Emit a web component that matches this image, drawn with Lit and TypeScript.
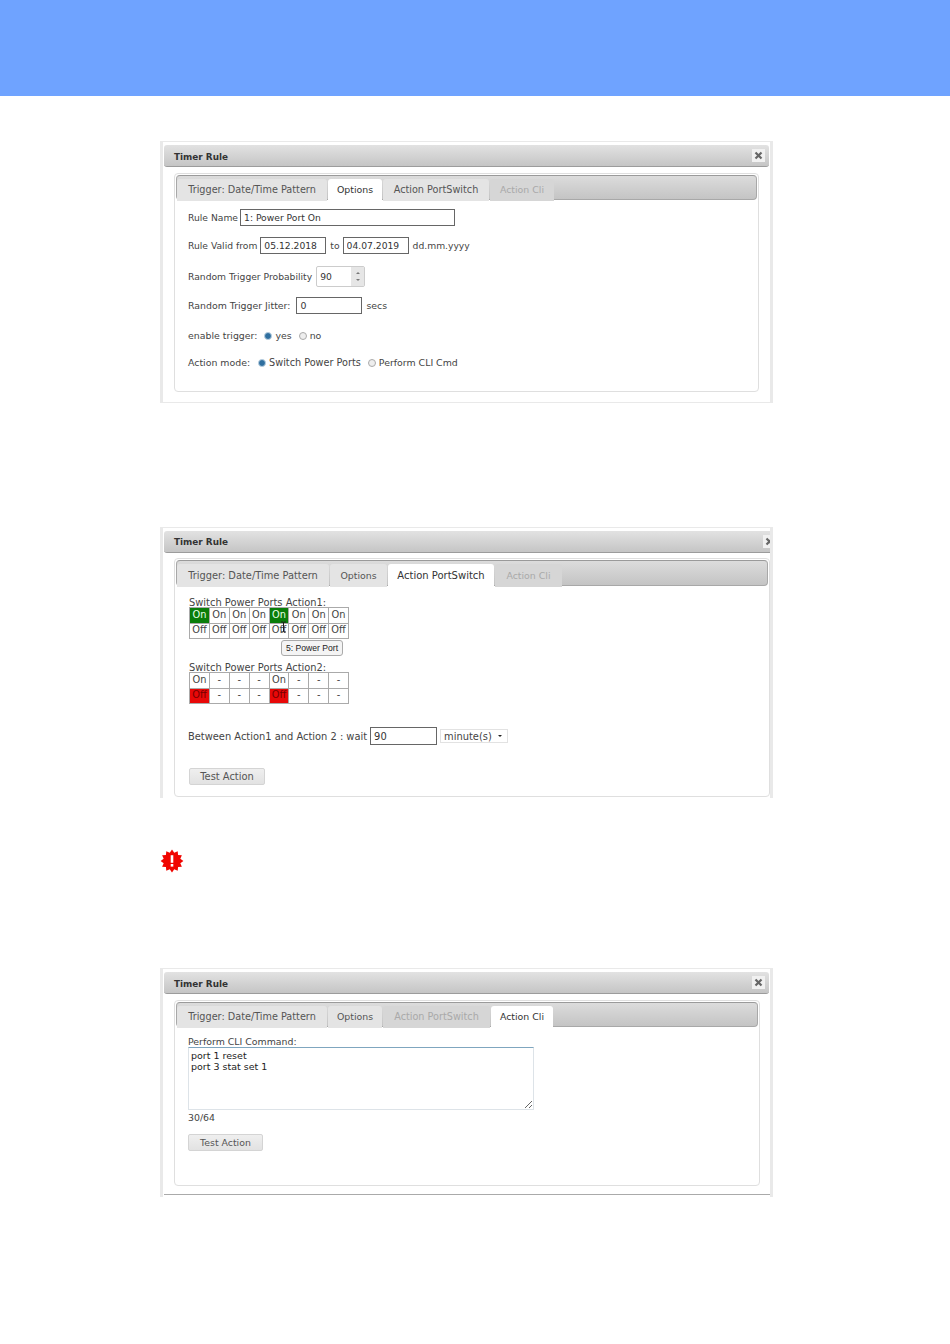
import { LitElement, html, css, svg } from "lit";
import { customElement } from "lit/decorators.js";

const TABS = ["Trigger: Date/Time Pattern", "Options", "Action PortSwitch", "Action Cli"];

function burst() {
  const pts: string[] = [];
  const n = 12;
  for (let i = 0; i < n * 2; i++) {
    const r = i % 2 ? 8.6 : 11.4;
    const a = (Math.PI * i) / n - Math.PI / 2;
    pts.push(`${(12 + r * Math.cos(a)).toFixed(2)},${(12 + r * Math.sin(a)).toFixed(2)}`);
  }
  return svg`<polygon points=${pts.join(" ")} fill="#f00500"/>
    <rect x="10.7" y="6.2" width="2.6" height="7.6" fill="#fff"/>
    <rect x="10.7" y="15" width="2.6" height="2.6" fill="#fff"/>`;
}

@customElement("app-root")
export class AppRoot extends LitElement {
  static styles = css`
    :host { display: block; width: 950px; height: 1344px; background: #fff; overflow: hidden;
      font-family: "DejaVu Sans", sans-serif; font-size: 9.4px; color: #444; }
    .top { height: 96px; background: #6fa3ff; }
    .dlg { position: relative; box-sizing: border-box; margin-left: 160px; width: 613px; overflow: hidden;
      border: solid #e9e9e9; border-width: 1px 3px 1px 3px; padding: 3px 0 0 1px; background: #fff; }
    .d1 { margin-top: 45px; height: 262px; }
    .d2 { margin-top: 124px; height: 271px; border-bottom: 0; font-size: 9.9px; }
    .d3 { height: 229px; border-bottom: 0; }
    .bar { box-sizing: border-box; height: 22px; width: 605px; flex: none; display: flex; align-items: center;
      justify-content: space-between; padding: 0 4px 0 10px; border-radius: 3px;
      border-bottom: 1px solid #9c9c9c; background: linear-gradient(#e2e2e2, #c5c5c5); }
    .d2 .bar { width: 612px; }
    .title { font-weight: 700; color: #333; font-size: 8.9px; }
    .d1 .title, .d3 .title { margin-top: 2px; }
    .x { width: 13px; height: 13px; background: #f1f1f1; display: flex; align-items: center; justify-content: center; }
    .d2 .x { margin-right: -4px; }
    .panel { box-sizing: border-box; margin: 6px 0 0 10px; width: 585px; border: 1px solid #dfdfdf;
      border-radius: 4px; padding: 1px; }
    .d1 .panel { height: 219px; }
    .d2 .panel { width: 596px; height: 239px; margin-top: 5px; }
    .d3 .panel { width: 586px; height: 186px; }
    .tabs { box-sizing: border-box; height: 25px; display: flex; gap: 1px; padding: 3px 0 0 0;
      border: 1px solid #a8a8a8; border-top-color: #9a9a9a; border-radius: 4px;
      background: linear-gradient(#dcdcdc, #c4c4c4); }
    .d2 .tabs { height: 26px; }
    .tab { box-sizing: border-box; height: 22px; display: flex; align-items: center; justify-content: center;
      background: #e4e4e4; border-radius: 3px 3px 0 0; color: #555; padding-bottom: 2px; font-size: 9.4px; }
    .d2 .tab { height: 23px; font-size: 9.4px; padding-bottom: 1px; }
    .tab.on { background: #fff; color: #333; height: 23px; padding-bottom: 3px; }
    .d2 .tab.on { height: 24px; padding-bottom: 2px; }
    .tab.off { background: #d6d6d6; color: #a9a9a9; }
    .t0 { width: 150px; } .t1 { width: 54px; } .t2 { width: 106px; } .t3 { width: 64px; }
    .tab.t0, .tab.t2 { font-size: 9.7px; }
    .d2 .t0 { width: 152px; font-size: 9.85px; } .d2 .t1 { width: 57px; } .d2 .t2 { width: 106px; font-size: 10px; } .d2 .t3 { width: 67px; }
    .d3 .t2 { width: 107px; } .d3 .t3 { width: 62px; }
    .body { padding-left: 12px; display: flex; flex-direction: column; align-items: flex-start; position: relative; }
    .d2 .body { padding-left: 13px; }
    .row { display: flex; align-items: center; white-space: nowrap; }
    .narrow { font-size: 9.2px; }
    .wide { font-size: 9.7px; }
    .ml2 { margin-left: 2px; } .ml3 { margin-left: 3px; } .ml4 { margin-left: 4px; } .ml6 { margin-left: 6px; }
    .ml7 { margin-left: 7px; } .ml8 { margin-left: 8px; }
    .mr3 { margin-right: 3px; }
    .back1 { margin-left: -1px; }
    input, textarea { box-sizing: border-box; font: inherit; color: #333; outline: 0;
      background: #fff; padding: 0 3px; display: block; }
    .in { height: 17px; border: 1px solid #666; }
    .w215 { width: 215px; }
    .w66 { width: 66px; }
    .w67 { width: 67px; height: 18px; }
    .spin { box-sizing: border-box; width: 49px; height: 21px; margin-left: 4px; border: 1px solid #ccc;
      border-radius: 2px; display: flex; color: #333; }
    .spin span { flex: 1; align-self: center; padding-left: 3px; }
    .arrows { width: 13px; background: #e6e6e6; display: flex; flex-direction: column; align-items: center;
      justify-content: space-around; padding: 2px 0; box-sizing: border-box; }
    .up, .dn { width: 0; height: 0; border: 2.5px solid transparent; }
    .up { border-bottom-color: #777; border-top-width: 0; }
    .dn { border-top-color: #777; border-bottom-width: 0; }
    .radio { box-sizing: border-box; width: 8px; height: 8px; border-radius: 50%; border: 1px solid #aaa;
      background: #eee; flex: none; }
    .radio.sel { background: #2f6f9f; border-color: #b9cfe0; }
    table { border-collapse: collapse; table-layout: fixed; color: #444; width: 160px; }
    .t-up { margin-top: -1px; }
    td { box-sizing: border-box; height: 15.5px; border: 1px solid #aaa; padding: 0 0 1px; text-align: center;
      font-size: 9.8px; line-height: 1; background: #fff; }
    td.g { background: #0a7d0a; color: #e8ffe8; }
    td.r { background: #e80808; color: #700; }
    .tip { position: absolute; left: 105px; top: 54px; box-sizing: border-box; width: 62px; height: 16px;
      background: #f4f4f4; border: 1px solid #aaa; border-radius: 3px; display: flex; align-items: center;
      justify-content: center; font-family: "Liberation Sans", sans-serif; font-size: 8.6px; color: #222; }
    .cursor { position: absolute; left: 104px; top: 35px; }
    .select { box-sizing: border-box; width: 68px; height: 14px; margin-left: 3px; border: 1px solid #e2e2e2;
      display: flex; align-items: center; justify-content: space-between; padding: 0 5px 0 3px; color: #444; }
    .select i { width: 0; height: 0; border: 2.5px solid transparent; border-top-color: #222; border-bottom-width: 0; }
    .btn { box-sizing: border-box; height: 17px; border: 1px solid #d4d4d4; border-radius: 2px;
      background: linear-gradient(#efefef, #e2e2e2); display: flex; align-items: center; justify-content: center; color: #555; }
    textarea { width: 346px; height: 63px; margin: 0; border: 1px solid #dde3e8; border-top-color: #7fa6bf; resize: both;
      line-height: 11px; font-size: 9.5px; padding: 2px; color: #222; overflow: hidden; }
    .warn { margin: 51px 0 0 160px; height: 119px; display: flex; align-items: flex-start; }
    .rule { height: 1px; background: #aaa; margin-top: 8px; width: 606px; }
    .m2 { margin-top: 2px; } .m9 { margin-top: 9px; } .m10 { margin-top: 10px; } .m11 { margin-top: 11px; } .m12 { margin-top: 12px; }
    .m16 { margin-top: 16px; } .m23 { margin-top: 23px; }
    .b76 { width: 76px; } .b75 { width: 75px; }
  `;

  private tabs(active: number, disabled: number) {
    return html`<div class="tabs">${TABS.map((t, i) => html`<div
      class="tab t${i} ${i === active ? "on" : ""} ${i === disabled ? "off" : ""}">${t}</div>`)}</div>`;
  }

  private head() {
    return html`<div class="bar"><span class="title">Timer Rule</span>
      <span class="x"><svg width="9" height="9" viewBox="0 0 9 9"><path d="M1.5 1.5l6 6M7.5 1.5l-6 6" stroke="#666" stroke-width="2.2"/></svg></span></div>`;
  }

  private ports(rows: string[][], cls = "") {
    return html`<table class=${cls}>${rows.map((r) => html`<tr>${r.map((c) => {
      const label = c.startsWith("On") ? "On" : c.startsWith("Off") ? "Off" : "-";
      return html`<td class=${c.endsWith("#g") ? "g" : c.endsWith("#r") ? "r" : ""}>${label}</td>`;
    })}</tr>`)}</table>`;
  }

  render() {
    const a1a = ["On#g", "On", "On", "On", "On#g", "On", "On", "On"];
    const a1b = Array(8).fill("Off");
    const a2a = ["On", "-", "-", "-", "On", "-", "-", "-"];
    const a2b = ["Off#r", "-", "-", "-", "Off#r", "-", "-", "-"];
    return html`
      <div class="top"></div>

      <section class="dlg d1">
        ${this.head()}
        <div class="panel">
          ${this.tabs(1, 3)}
          <div class="body">
            <div class="row narrow m9">Rule Name<input class="in w215 ml2" type="text" value="1: Power Port On" /></div>
            <div class="row narrow m11">Rule Valid from<input class="in w66 ml3" type="text" value="05.12.2018" /><span class="ml4 mr3">to</span><input class="in w66" type="text" value="04.07.2019" /><span class="ml4">dd.mm.yyyy</span></div>
            <div class="row narrow m12">Random Trigger Probability<div class="spin"><span>90</span><div class="arrows"><i class="up"></i><i class="dn"></i></div></div></div>
            <div class="row m10">Random Trigger Jitter:<input class="in w66 ml6" type="text" value="0" /><span class="ml4">secs</span></div>
            <div class="row m16">enable trigger:<i class="radio sel ml7"></i><span class="ml3">yes</span><i class="radio ml7"></i><span class="ml3">no</span></div>
            <div class="row m16">Action mode:<i class="radio sel ml8"></i><span class="ml3 wide">Switch Power Ports</span><i class="radio ml7"></i><span class="ml3">Perform CLI Cmd</span></div>
          </div>
        </div>
      </section>

      <section class="dlg d2">
        ${this.head()}
        <div class="panel">
          ${this.tabs(2, 3)}
          <div class="body">
            <div class="row m11">Switch Power Ports Action1:</div>
            ${this.ports([a1a, a1b], "t-up")}
            <div class="tip">5: Power Port</div>
            <svg class="cursor" width="7" height="12" viewBox="0 0 7 12"><path d="M1 1h2l.5 1L4 1h2M3.5 2v8M1 11h2l.5-1 .5 1h2" fill="none" stroke="#222"/></svg>
            <div class="row m23">Switch Power Ports Action2:</div>
            ${this.ports([a2a, a2b], "t-up")}
            <div class="row m23 back1">Between Action1 and Action 2 : wait<input class="in w67 ml3" type="text" value="90" /><div class="select">minute(s)<i></i></div></div>
            <div class="btn b76 m23">Test Action</div>
          </div>
        </div>
      </section>

      <div class="warn"><svg width="24" height="24" viewBox="0 0 24 24">${burst()}</svg></div>

      <section class="dlg d3">
        ${this.head()}
        <div class="panel">
          ${this.tabs(3, 2)}
          <div class="body">
            <div class="row m9">Perform CLI Command:</div>
            <textarea .value=${"port 1 reset\nport 3 stat set 1"}></textarea>
            <div class="row m2">30/64</div>
            <div class="btn b75 m11">Test Action</div>
          </div>
        </div>
        <div class="rule"></div>
      </section>
    `;
  }
}
